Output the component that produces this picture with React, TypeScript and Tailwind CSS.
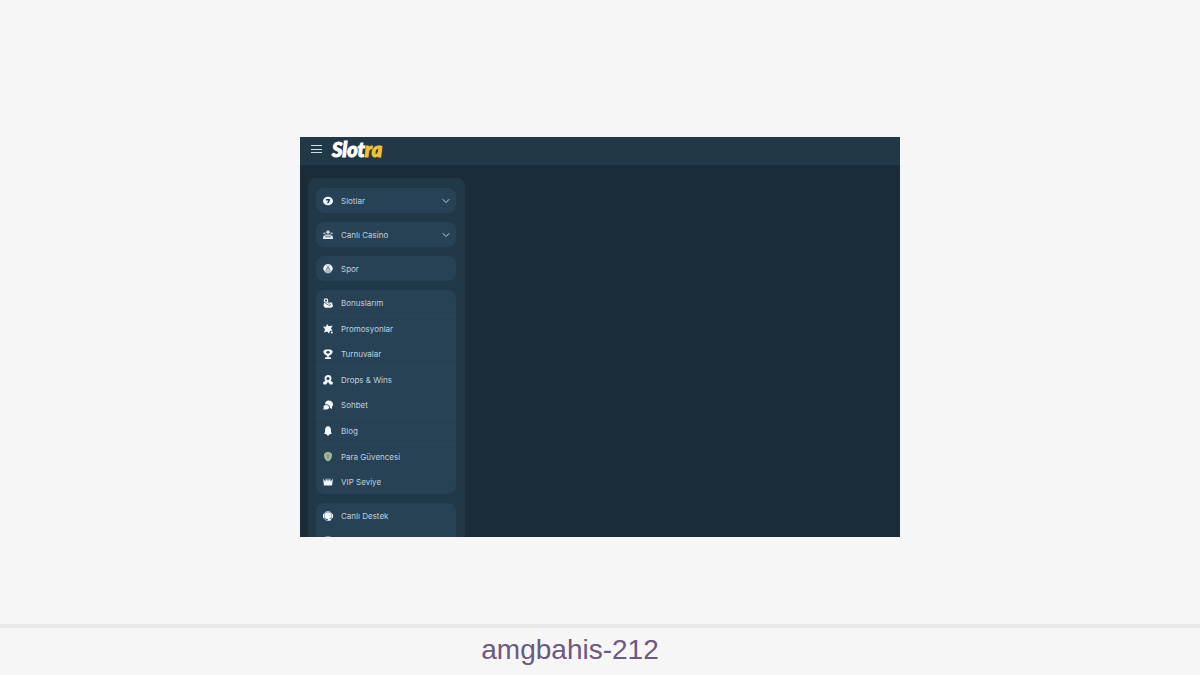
import type { ReactNode } from "react";

type Item = { label: string; icon: ReactNode; divider?: boolean };

function Icon({ children }: { children: ReactNode }) {
  return (
    <svg viewBox="0 0 20 20" className="size-[10px] shrink-0" fill="#eef8fb" aria-hidden="true">
      {children}
    </svg>
  );
}

/* ─── Icons ─── */
const slotIcon = (
  <Icon>
    <ellipse cx="10" cy="10" rx="10" ry="8.5" />
    <path d="M6 6h8v3l-3 5.500H8L10.500 9H6z" fill="#274155" />
  </Icon>
);

const casinoIcon = (
  <Icon>
    <path d="M9 0h2v3h3v2.500h-3V9H9V5.500H6V3h3z" />
    <path d="M1 5h4v3H1zM15 5h4v3h-4zM3 9h14v3H3z" opacity="0.7" />
    <path d="M1 11l4 2h10l4-2 1 7H0z" />
    <path d="M3 15.500h14" stroke="#274155" opacity="0.6" />
  </Icon>
);

const sportIcon = (
  <Icon>
    <circle cx="10" cy="9.500" r="9.500" />
    <path
      d="M10 6v14M10 6C6 9 5.500 13 6.500 19M10 6c4 3 4.500 7 3.500 13M1 12c1.500 1 2 3 2 5M19 12c-1.500 1-2 3-2 5"
      fill="none"
      stroke="#274155"
      strokeWidth="1.300"
    />
    <path d="M6 1l4 4 4-4" fill="none" stroke="#274155" />
  </Icon>
);

const bonusIcon = (
  <Icon>
    <circle cx="6" cy="5" r="3.400" fill="none" stroke="#eef8fb" strokeWidth="2.400" />
    <path d="M2 10l5-1 11 0 2 8-4 2.500H4L1 16z" />
    <path d="M4 10l10 6M11 10l5 4" stroke="#274155" strokeWidth="1.300" />
  </Icon>
);

const promoIcon = (
  <Icon>
    <path d="M8 0l3.500 4.500L19 3l-3 6 3 4.500-5 .5L12 19l-4-4-6 2L4 10.500 0 5l6 .5z" />
    <circle cx="17.500" cy="17" r="2" />
  </Icon>
);

const cupIcon = (
  <Icon>
    <path d="M5 1h10l4 2.500C20 8 17 11 14 12.500L11.500 14v2.500H16V20H4v-3.500h4.500V14L6 12.500C3 11 0 8 1 3.500z" />
    <ellipse cx="10" cy="6.500" rx="3.500" ry="2.400" fill="#274155" />
  </Icon>
);

const dropsIcon = (
  <Icon>
    <circle cx="10" cy="7" r="5" fill="none" stroke="#eef8fb" strokeWidth="3.800" />
    <path d="M5 11l-5 4 1 4h5l4-5zM15 11l5 4-1 4h-5l-4-5z" />
  </Icon>
);

const chatIcon = (
  <Icon>
    <path d="M11 1c5 0 9 3 9 7.500 0 2-1 4-2 5V18l-4-2c0-5-3-8-10-7.500C4 4 7 1 11 1z" />
    <path d="M6 10c4 0 6 1.500 6 4.500S10 19 6 19H0l1.500-3C0 12.500 2 10 6 10z" />
  </Icon>
);

const bellIcon = (
  <Icon>
    <path d="M10 0c4 1 6 4 6 8v4l1.500 4h-15L4 12V8c0-4 2-7 6-8z" />
    <path d="M7 16h6c0 2-1 3-3 3s-3-1-3-3z" />
  </Icon>
);

const shieldIcon = (
  <Icon>
    <path d="M10 0c4 0 8 2 8 6 0 6-3 11-8 13-5-2-8-7-8-13 0-4 4-6 8-6z" fill="#aabd9e" />
    <path d="M5 6h10M6 10h8M10 3v13" stroke="#6c8872" strokeWidth="1.300" />
  </Icon>
);

const crownIcon = (
  <Icon>
    <path d="M0 3l4.500 6L6 2l2.500 6L10 2l1.500 6L14 2l1.500 7L20 3l-2 14H2z" />
  </Icon>
);

const supportIcon = (
  <Icon>
    <circle cx="10" cy="10" r="9" fill="none" stroke="#eef8fb" strokeWidth="1.400" />
    <circle cx="10" cy="9.500" r="6.800" />
    <path d="M0 6.500h3v7H0zM17 6.500h3v7h-3zM10 16h6v3h-6z" />
  </Icon>
);

const phoneIcon = (
  <Icon>
    <rect x="3" y="1" width="14" height="18" rx="3" opacity="0.7" />
  </Icon>
);

const categories: Item[] = [
  { label: "Slotlar", icon: slotIcon },
  { label: "Canlı Casino", icon: casinoIcon },
];

const links: Item[] = [
  { label: "Bonuslarım", icon: bonusIcon, divider: true },
  { label: "Promosyonlar", icon: promoIcon },
  { label: "Turnuvalar", icon: cupIcon, divider: true },
  { label: "Drops & Wins", icon: dropsIcon },
  { label: "Sohbet", icon: chatIcon, divider: true },
  { label: "Blog", icon: bellIcon, divider: true },
  { label: "Para Güvencesi", icon: shieldIcon },
  { label: "VIP Seviye", icon: crownIcon },
];

function MenuLink({ item }: { item: Item }) {
  return (
    <li className={item.divider ? "border-b border-[#2c4759]" : ""}>
      <a href="#" className="flex h-[25px] items-center gap-2 px-[7px]">
        {item.icon}
        <span>{item.label}</span>
      </a>
    </li>
  );
}

function Sidebar() {
  return (
    <nav className="flex w-[157px] flex-col gap-[9px] rounded-t-lg bg-[#203847] pt-[10px] pr-[9px] pl-2 text-[8px] text-[#bfd3df]">
      {categories.map((item) => (
        <button
          key={item.label}
          type="button"
          className="flex h-[25px] items-center gap-2 rounded-lg bg-[#274155] px-[6px] pl-[7px] text-left"
        >
          {item.icon}
          <span className="flex-1">{item.label}</span>
          <svg viewBox="0 0 8 8" className="size-2" fill="none" stroke="#bfd3df" aria-hidden="true">
            <path d="M1 2.500l3 3 3-3" strokeLinecap="round" />
          </svg>
        </button>
      ))}
      <ul className="rounded-lg bg-[#274155]">
        <MenuLink item={{ label: "Spor", icon: sportIcon }} />
      </ul>
      <ul className="rounded-lg bg-[#274155]">
        {links.map((item) => (
          <MenuLink key={item.label} item={item} />
        ))}
      </ul>
      <ul className="rounded-t-lg bg-[#274155]">
        <MenuLink item={{ label: "Canlı Destek", icon: supportIcon }} />
        <li className="flex h-[25px] items-center px-[7px]">{phoneIcon}</li>
      </ul>
    </nav>
  );
}

export default function App() {
  return (
    <div className="flex min-h-screen flex-col bg-[#f6f6f6]">
      <main className="flex flex-1 items-center justify-center pt-[50px]">
        <section className="flex aspect-3/2 w-1/2 flex-col overflow-hidden bg-[#1a2c38] font-['Inter','Liberation_Sans',sans-serif]">
          <header className="flex h-7 shrink-0 items-center gap-[10px] bg-[#213846] px-[10px] pb-[5px]">
            <button type="button" aria-label="Menu">
              <svg viewBox="0 0 12 10" className="h-[10px] w-3" stroke="#d0dee5" aria-hidden="true">
                <path d="M1 1.500h11M1 5.500h11M1 8.500h11" />
              </svg>
            </button>
            <a
              href="#"
              className="font-['Lato','Liberation_Sans',sans-serif] text-[20px] leading-none font-black text-white italic [-webkit-text-stroke:1px]"
            >
              Slot<span className="text-[#f0c52c]">ra</span>
            </a>
          </header>
          <div className="min-h-0 flex-1 px-2 pt-[13px]">
            <Sidebar />
          </div>
        </section>
      </main>
      <footer className="border-t-4 border-[#e8e8e8] pr-[60px] text-center">
        <h1 className="pt-[2px] pb-[6px] font-['Liberation_Sans',Arial,sans-serif] text-[28px] leading-[39px] text-[#6b5a7e]">
          amgbahis-212
        </h1>
      </footer>
    </div>
  );
}
